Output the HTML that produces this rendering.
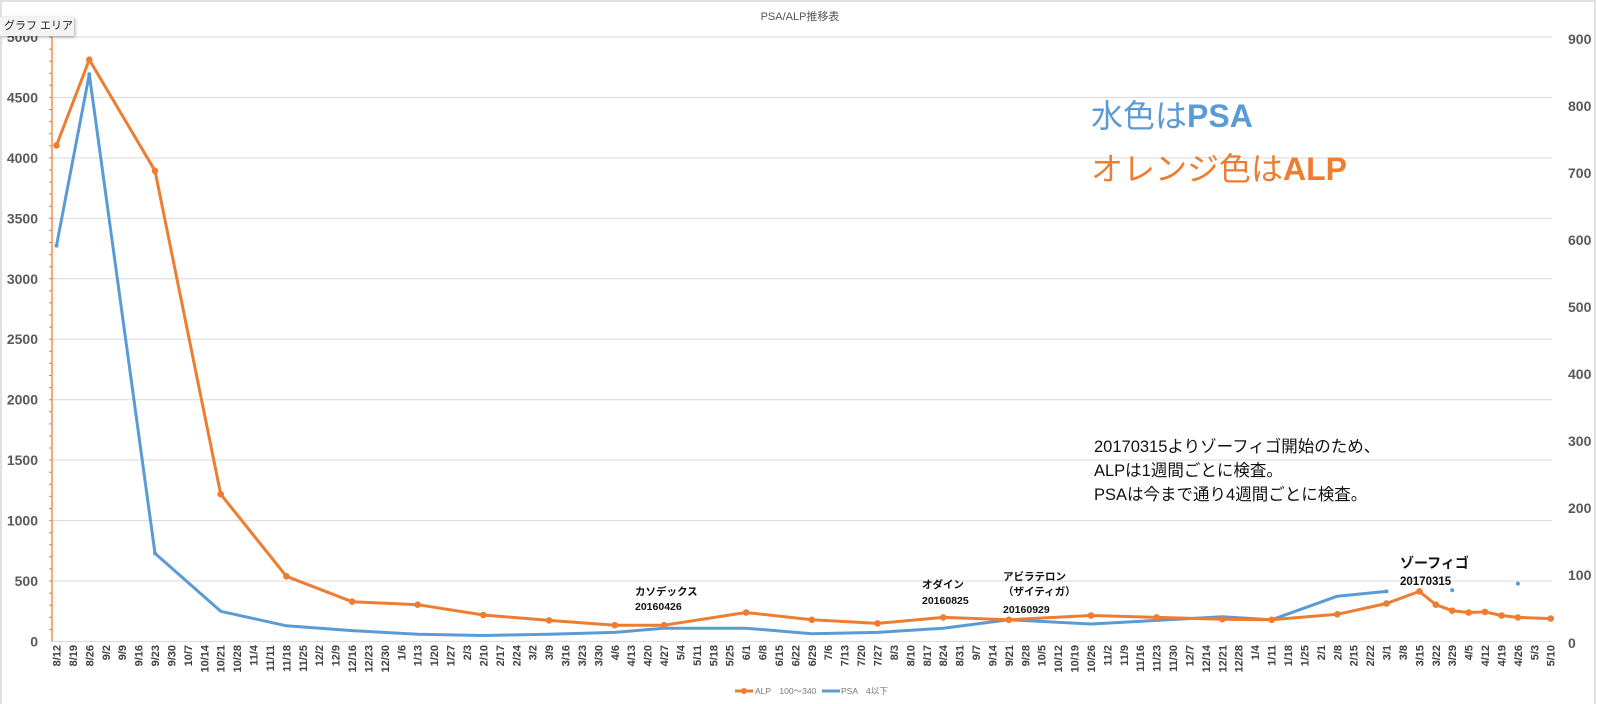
<!DOCTYPE html>
<html><head><meta charset="utf-8"><style>
body{margin:0;background:#fff;width:1597px;height:704px;overflow:hidden;position:relative;font-family:"Liberation Sans","Noto Sans CJK JP",sans-serif}
.tip{position:absolute;left:0;top:17px;height:19px;width:74px;background:#f3f3f3;box-shadow:1px 1px 3px rgba(0,0,0,.35);font-size:11px;line-height:19px;padding-left:4px;box-sizing:border-box;color:#222;white-space:nowrap;overflow:hidden}
</style></head><body>
<svg width="1597" height="704" style="position:absolute;left:0;top:0" font-family="Liberation Sans, Noto Sans CJK JP, sans-serif">
<rect x="1" y="1" width="1594" height="710" fill="none" stroke="#d6d6d6" stroke-width="1.5"/>
<text x="800" y="20" font-size="11" fill="#555" text-anchor="middle">PSA/ALP推移表</text>
<g stroke="#d9d9d9" stroke-width="1">
<line x1="52" y1="37" x2="1552" y2="37"/><line x1="52" y1="97.4" x2="1552" y2="97.4"/><line x1="52" y1="157.9" x2="1552" y2="157.9"/><line x1="52" y1="218.3" x2="1552" y2="218.3"/><line x1="52" y1="278.8" x2="1552" y2="278.8"/><line x1="52" y1="339.2" x2="1552" y2="339.2"/><line x1="52" y1="399.7" x2="1552" y2="399.7"/><line x1="52" y1="460.1" x2="1552" y2="460.1"/><line x1="52" y1="520.6" x2="1552" y2="520.6"/><line x1="52" y1="581" x2="1552" y2="581"/><line x1="52" y1="641.5" x2="1552" y2="641.5"/>
</g>
<line x1="52" y1="37" x2="52" y2="641.5" stroke="#ed7d31" stroke-width="1.3"/>
<path stroke="#ed7d31" stroke-width="1" d="M49 49.1h3M49 61.2h3M49 73.3h3M49 85.3h3M49 109.5h3M49 121.6h3M49 133.7h3M49 145.8h3M49 170h3M49 182.1h3M49 194.1h3M49 206.2h3M49 230.4h3M49 242.5h3M49 254.6h3M49 266.7h3M49 290.9h3M49 302.9h3M49 315h3M49 327.1h3M49 351.3h3M49 363.4h3M49 375.5h3M49 387.6h3M49 411.8h3M49 423.9h3M49 435.9h3M49 448h3M49 472.2h3M49 484.3h3M49 496.4h3M49 508.5h3M49 532.7h3M49 544.8h3M49 556.8h3M49 568.9h3M49 593.1h3M49 605.2h3M49 617.3h3M49 629.4h3M49 37h3M49 97.4h3M49 157.9h3M49 218.3h3M49 278.8h3M49 339.2h3M49 399.7h3M49 460.1h3M49 520.6h3M49 581h3"/>
<g font-size="14" font-weight="bold" fill="#595959" text-anchor="end">
<text x="38" y="42">5000</text><text x="38" y="102.4">4500</text><text x="38" y="162.9">4000</text><text x="38" y="223.3">3500</text><text x="38" y="283.8">3000</text><text x="38" y="344.2">2500</text><text x="38" y="404.7">2000</text><text x="38" y="465.1">1500</text><text x="38" y="525.6">1000</text><text x="38" y="586">500</text><text x="38" y="646.5">0</text>
</g>
<g font-size="14" font-weight="bold" fill="#595959">
<text x="1568" y="44">900</text><text x="1568" y="111">800</text><text x="1568" y="178">700</text><text x="1568" y="245">600</text><text x="1568" y="312">500</text><text x="1568" y="379">400</text><text x="1568" y="446">300</text><text x="1568" y="513">200</text><text x="1568" y="580">100</text><text x="1568" y="648">0</text>
</g>
<g font-size="11" font-weight="bold" fill="#404040" text-anchor="end">
<text transform="translate(60.5,645) rotate(-90)">8/12</text><text transform="translate(76.9,645) rotate(-90)">8/19</text><text transform="translate(93.3,645) rotate(-90)">8/26</text><text transform="translate(109.8,645) rotate(-90)">9/2</text><text transform="translate(126.2,645) rotate(-90)">9/9</text><text transform="translate(142.6,645) rotate(-90)">9/16</text><text transform="translate(159,645) rotate(-90)">9/23</text><text transform="translate(175.4,645) rotate(-90)">9/30</text><text transform="translate(191.9,645) rotate(-90)">10/7</text><text transform="translate(208.3,645) rotate(-90)">10/14</text><text transform="translate(224.7,645) rotate(-90)">10/21</text><text transform="translate(241.1,645) rotate(-90)">10/28</text><text transform="translate(257.5,645) rotate(-90)">11/4</text><text transform="translate(274,645) rotate(-90)">11/11</text><text transform="translate(290.4,645) rotate(-90)">11/18</text><text transform="translate(306.8,645) rotate(-90)">11/25</text><text transform="translate(323.2,645) rotate(-90)">12/2</text><text transform="translate(339.6,645) rotate(-90)">12/9</text><text transform="translate(356.1,645) rotate(-90)">12/16</text><text transform="translate(372.5,645) rotate(-90)">12/23</text><text transform="translate(388.9,645) rotate(-90)">12/30</text><text transform="translate(405.3,645) rotate(-90)">1/6</text><text transform="translate(421.7,645) rotate(-90)">1/13</text><text transform="translate(438.2,645) rotate(-90)">1/20</text><text transform="translate(454.6,645) rotate(-90)">1/27</text><text transform="translate(471,645) rotate(-90)">2/3</text><text transform="translate(487.4,645) rotate(-90)">2/10</text><text transform="translate(503.8,645) rotate(-90)">2/17</text><text transform="translate(520.3,645) rotate(-90)">2/24</text><text transform="translate(536.7,645) rotate(-90)">3/2</text><text transform="translate(553.1,645) rotate(-90)">3/9</text><text transform="translate(569.5,645) rotate(-90)">3/16</text><text transform="translate(585.9,645) rotate(-90)">3/23</text><text transform="translate(602.4,645) rotate(-90)">3/30</text><text transform="translate(618.8,645) rotate(-90)">4/6</text><text transform="translate(635.2,645) rotate(-90)">4/13</text><text transform="translate(651.6,645) rotate(-90)">4/20</text><text transform="translate(668,645) rotate(-90)">4/27</text><text transform="translate(684.5,645) rotate(-90)">5/4</text><text transform="translate(700.9,645) rotate(-90)">5/11</text><text transform="translate(717.3,645) rotate(-90)">5/18</text><text transform="translate(733.7,645) rotate(-90)">5/25</text><text transform="translate(750.1,645) rotate(-90)">6/1</text><text transform="translate(766.6,645) rotate(-90)">6/8</text><text transform="translate(783,645) rotate(-90)">6/15</text><text transform="translate(799.4,645) rotate(-90)">6/22</text><text transform="translate(815.8,645) rotate(-90)">6/29</text><text transform="translate(832.2,645) rotate(-90)">7/6</text><text transform="translate(848.7,645) rotate(-90)">7/13</text><text transform="translate(865.1,645) rotate(-90)">7/20</text><text transform="translate(881.5,645) rotate(-90)">7/27</text><text transform="translate(897.9,645) rotate(-90)">8/3</text><text transform="translate(914.3,645) rotate(-90)">8/10</text><text transform="translate(930.8,645) rotate(-90)">8/17</text><text transform="translate(947.2,645) rotate(-90)">8/24</text><text transform="translate(963.6,645) rotate(-90)">8/31</text><text transform="translate(980,645) rotate(-90)">9/7</text><text transform="translate(996.4,645) rotate(-90)">9/14</text><text transform="translate(1012.9,645) rotate(-90)">9/21</text><text transform="translate(1029.3,645) rotate(-90)">9/28</text><text transform="translate(1045.7,645) rotate(-90)">10/5</text><text transform="translate(1062.1,645) rotate(-90)">10/12</text><text transform="translate(1078.5,645) rotate(-90)">10/19</text><text transform="translate(1095,645) rotate(-90)">10/26</text><text transform="translate(1111.4,645) rotate(-90)">11/2</text><text transform="translate(1127.8,645) rotate(-90)">11/9</text><text transform="translate(1144.2,645) rotate(-90)">11/16</text><text transform="translate(1160.6,645) rotate(-90)">11/23</text><text transform="translate(1177.1,645) rotate(-90)">11/30</text><text transform="translate(1193.5,645) rotate(-90)">12/7</text><text transform="translate(1209.9,645) rotate(-90)">12/14</text><text transform="translate(1226.3,645) rotate(-90)">12/21</text><text transform="translate(1242.7,645) rotate(-90)">12/28</text><text transform="translate(1259.2,645) rotate(-90)">1/4</text><text transform="translate(1275.6,645) rotate(-90)">1/11</text><text transform="translate(1292,645) rotate(-90)">1/18</text><text transform="translate(1308.4,645) rotate(-90)">1/25</text><text transform="translate(1324.8,645) rotate(-90)">2/1</text><text transform="translate(1341.3,645) rotate(-90)">2/8</text><text transform="translate(1357.7,645) rotate(-90)">2/15</text><text transform="translate(1374.1,645) rotate(-90)">2/22</text><text transform="translate(1390.5,645) rotate(-90)">3/1</text><text transform="translate(1406.9,645) rotate(-90)">3/8</text><text transform="translate(1423.4,645) rotate(-90)">3/15</text><text transform="translate(1439.8,645) rotate(-90)">3/22</text><text transform="translate(1456.2,645) rotate(-90)">3/29</text><text transform="translate(1472.6,645) rotate(-90)">4/5</text><text transform="translate(1489,645) rotate(-90)">4/12</text><text transform="translate(1505.5,645) rotate(-90)">4/19</text><text transform="translate(1521.9,645) rotate(-90)">4/26</text><text transform="translate(1538.3,645) rotate(-90)">5/3</text><text transform="translate(1554.7,645) rotate(-90)">5/10</text>
</g>
<polyline fill="none" stroke="#5b9bd5" stroke-width="3" stroke-linejoin="round" points="56.5,245.6 89.3,74.2 155,553.4 220.7,611.3 286.4,625.8 352.1,630.6 417.7,634.3 483.4,635.5 549.1,634.3 614.8,632.4 664,628.2 746.1,628.2 811.8,633.7 877.5,632.4 943.2,628.2 1008.9,619.8 1091,624 1222.3,616.8 1271.6,619.8 1337.3,596.2 1386.5,591.4"/>
<g fill="#5b9bd5"><circle cx="1452.2" cy="590.2" r="2"/><circle cx="1517.9" cy="583.6" r="2"/><circle cx="56.5" cy="245.6" r="2"/><circle cx="89.3" cy="74.2" r="2"/><circle cx="155" cy="553.4" r="2"/><circle cx="1386.5" cy="591.4" r="2"/></g>
<polyline fill="none" stroke="#ed7d31" stroke-width="3" stroke-linejoin="round" points="56.5,145.4 89.3,59.7 155,170.8 220.7,494.2 286.4,576.3 352.1,601.7 417.7,604.7 483.4,615 549.1,620.4 614.8,625.2 664,625.2 746.1,612.5 811.8,619.8 877.5,623.4 943.2,617.4 1008.9,619.8 1091,615.5 1156.6,617.4 1222.3,619.2 1271.6,619.8 1337.3,614.3 1386.5,603.5 1419.4,591.4 1435.8,604.7 1452.2,610.7 1468.6,612.5 1485,611.9 1501.5,615.5 1517.9,617.4 1550.7,618.6"/>
<g fill="#ed7d31"><circle cx="56.5" cy="145.4" r="3.3"/><circle cx="89.3" cy="59.7" r="3.3"/><circle cx="155" cy="170.8" r="3.3"/><circle cx="220.7" cy="494.2" r="3.3"/><circle cx="286.4" cy="576.3" r="3.3"/><circle cx="352.1" cy="601.7" r="3.3"/><circle cx="417.7" cy="604.7" r="3.3"/><circle cx="483.4" cy="615" r="3.3"/><circle cx="549.1" cy="620.4" r="3.3"/><circle cx="614.8" cy="625.2" r="3.3"/><circle cx="664" cy="625.2" r="3.3"/><circle cx="746.1" cy="612.5" r="3.3"/><circle cx="811.8" cy="619.8" r="3.3"/><circle cx="877.5" cy="623.4" r="3.3"/><circle cx="943.2" cy="617.4" r="3.3"/><circle cx="1008.9" cy="619.8" r="3.3"/><circle cx="1091" cy="615.5" r="3.3"/><circle cx="1156.6" cy="617.4" r="3.3"/><circle cx="1222.3" cy="619.2" r="3.3"/><circle cx="1271.6" cy="619.8" r="3.3"/><circle cx="1337.3" cy="614.3" r="3.3"/><circle cx="1386.5" cy="603.5" r="3.3"/><circle cx="1419.4" cy="591.4" r="3.3"/><circle cx="1435.8" cy="604.7" r="3.3"/><circle cx="1452.2" cy="610.7" r="3.3"/><circle cx="1468.6" cy="612.5" r="3.3"/><circle cx="1485" cy="611.9" r="3.3"/><circle cx="1501.5" cy="615.5" r="3.3"/><circle cx="1517.9" cy="617.4" r="3.3"/><circle cx="1550.7" cy="618.6" r="3.3"/></g>
<text x="1091" y="127" font-size="32" fill="#5b9bd5">水色は<tspan font-weight="bold">PSA</tspan></text>
<text x="1091" y="180" font-size="32" fill="#ed7d31">オレンジ色は<tspan font-weight="bold">ALP</tspan></text>
<g font-size="16.5" fill="#111">
<text x="1094" y="452">20170315よりゾーフィゴ開始のため、</text>
<text x="1094" y="476">ALPは1週間ごとに検査。</text>
<text x="1094" y="500">PSAは今まで通り4週間ごとに検査。</text>
</g>
<g font-size="10.5" font-weight="bold" fill="#111">
<text x="635" y="595">カソデックス</text><text x="635" y="610">20160426</text>
<text x="922" y="588">オダイン</text><text x="922" y="604">20160825</text>
<text x="1003" y="580">アビラテロン</text><text x="1003" y="595">（ザイティガ）</text><text x="1003" y="613">20160929</text>
<text x="1400" y="568" font-size="14">ゾーフィゴ</text><text x="1400" y="585" font-size="11.5">20170315</text>
</g>
<line x1="735" y1="691" x2="753" y2="691" stroke="#ed7d31" stroke-width="3"/><circle cx="744" cy="691" r="3" fill="#ed7d31"/>
<text x="755" y="694" font-size="8.5" fill="#777">ALP　100〜340</text>
<line x1="822" y1="691" x2="840" y2="691" stroke="#5b9bd5" stroke-width="3"/>
<text x="841" y="694" font-size="8.5" fill="#777">PSA　4以下</text>
</svg>
<div class="tip">グラフ エリア</div>
</body></html>
